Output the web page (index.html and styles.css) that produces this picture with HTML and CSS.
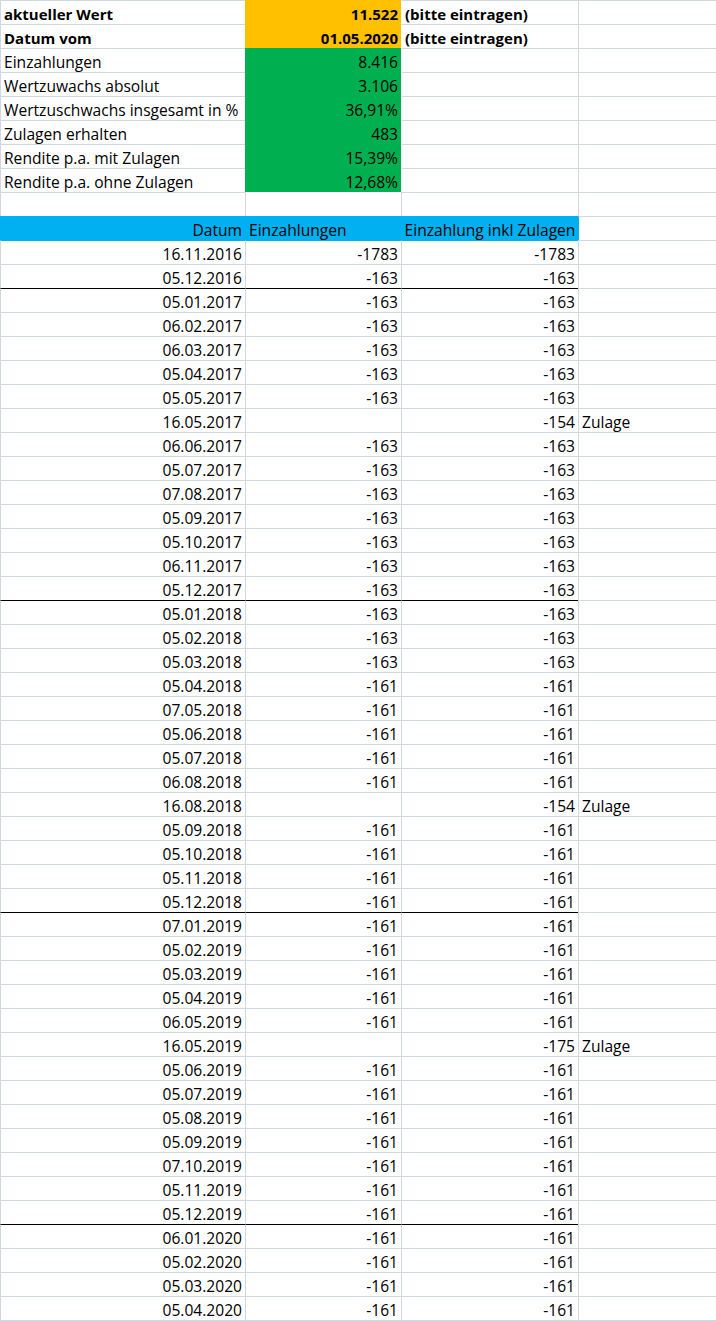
FILE: index.html
```html
<!DOCTYPE html>
<html lang="de">
<head>
<meta charset="utf-8">
<title>Wertentwicklung</title>
<link rel="stylesheet" href="styles.css">
</head>
<body>
<div class="sheet">
  <div class="c l b">aktueller Wert</div><div class="c r b orange">11.522</div><div class="c l b nl">(bitte eintragen)</div><div class="c"></div>
  <div class="c l b">Datum vom</div><div class="c r b orange">01.05.2020</div><div class="c l b nl">(bitte eintragen)</div><div class="c"></div>
  <div class="c l">Einzahlungen</div><div class="c r green">8.416</div><div class="c nl"></div><div class="c"></div>
  <div class="c l">Wertzuwachs absolut</div><div class="c r green">3.106</div><div class="c nl"></div><div class="c"></div>
  <div class="c l">Wertzuschwachs insgesamt in %</div><div class="c r green">36,91%</div><div class="c nl"></div><div class="c"></div>
  <div class="c l">Zulagen erhalten</div><div class="c r green">483</div><div class="c nl"></div><div class="c"></div>
  <div class="c l">Rendite p.a. mit Zulagen</div><div class="c r green">15,39%</div><div class="c nl"></div><div class="c"></div>
  <div class="c l">Rendite p.a. ohne Zulagen</div><div class="c r green">12,68%</div><div class="c nl"></div><div class="c"></div>
  <div class="c"></div><div class="c nt"></div><div class="c"></div><div class="c"></div>
  <div class="c r blue">Datum</div><div class="c l blue">Einzahlungen</div><div class="c ctr blue">Einzahlung inkl Zulagen</div><div class="c nlb"></div>

  <div class="c r bt">16.11.2016</div><div class="c r bt">-1783</div><div class="c r bt">-1783</div><div class="c"></div>
  <div class="c r">05.12.2016</div><div class="c r">-163</div><div class="c r">-163</div><div class="c"></div>
  <div class="c r sep">05.01.2017</div><div class="c r sep">-163</div><div class="c r sep">-163</div><div class="c"></div>
  <div class="c r">06.02.2017</div><div class="c r">-163</div><div class="c r">-163</div><div class="c"></div>
  <div class="c r">06.03.2017</div><div class="c r">-163</div><div class="c r">-163</div><div class="c"></div>
  <div class="c r">05.04.2017</div><div class="c r">-163</div><div class="c r">-163</div><div class="c"></div>
  <div class="c r">05.05.2017</div><div class="c r">-163</div><div class="c r">-163</div><div class="c"></div>
  <div class="c r">16.05.2017</div><div class="c r"></div><div class="c r">-154</div><div class="c l">Zulage</div>
  <div class="c r">06.06.2017</div><div class="c r">-163</div><div class="c r">-163</div><div class="c"></div>
  <div class="c r">05.07.2017</div><div class="c r">-163</div><div class="c r">-163</div><div class="c"></div>
  <div class="c r">07.08.2017</div><div class="c r">-163</div><div class="c r">-163</div><div class="c"></div>
  <div class="c r">05.09.2017</div><div class="c r">-163</div><div class="c r">-163</div><div class="c"></div>
  <div class="c r">05.10.2017</div><div class="c r">-163</div><div class="c r">-163</div><div class="c"></div>
  <div class="c r">06.11.2017</div><div class="c r">-163</div><div class="c r">-163</div><div class="c"></div>
  <div class="c r">05.12.2017</div><div class="c r">-163</div><div class="c r">-163</div><div class="c"></div>
  <div class="c r sep">05.01.2018</div><div class="c r sep">-163</div><div class="c r sep">-163</div><div class="c"></div>
  <div class="c r">05.02.2018</div><div class="c r">-163</div><div class="c r">-163</div><div class="c"></div>
  <div class="c r">05.03.2018</div><div class="c r">-163</div><div class="c r">-163</div><div class="c"></div>
  <div class="c r">05.04.2018</div><div class="c r">-161</div><div class="c r">-161</div><div class="c"></div>
  <div class="c r">07.05.2018</div><div class="c r">-161</div><div class="c r">-161</div><div class="c"></div>
  <div class="c r">05.06.2018</div><div class="c r">-161</div><div class="c r">-161</div><div class="c"></div>
  <div class="c r">05.07.2018</div><div class="c r">-161</div><div class="c r">-161</div><div class="c"></div>
  <div class="c r">06.08.2018</div><div class="c r">-161</div><div class="c r">-161</div><div class="c"></div>
  <div class="c r">16.08.2018</div><div class="c r"></div><div class="c r">-154</div><div class="c l">Zulage</div>
  <div class="c r">05.09.2018</div><div class="c r">-161</div><div class="c r">-161</div><div class="c"></div>
  <div class="c r">05.10.2018</div><div class="c r">-161</div><div class="c r">-161</div><div class="c"></div>
  <div class="c r">05.11.2018</div><div class="c r">-161</div><div class="c r">-161</div><div class="c"></div>
  <div class="c r">05.12.2018</div><div class="c r">-161</div><div class="c r">-161</div><div class="c"></div>
  <div class="c r sep">07.01.2019</div><div class="c r sep">-161</div><div class="c r sep">-161</div><div class="c"></div>
  <div class="c r">05.02.2019</div><div class="c r">-161</div><div class="c r">-161</div><div class="c"></div>
  <div class="c r">05.03.2019</div><div class="c r">-161</div><div class="c r">-161</div><div class="c"></div>
  <div class="c r">05.04.2019</div><div class="c r">-161</div><div class="c r">-161</div><div class="c"></div>
  <div class="c r">06.05.2019</div><div class="c r">-161</div><div class="c r">-161</div><div class="c"></div>
  <div class="c r">16.05.2019</div><div class="c r"></div><div class="c r">-175</div><div class="c l">Zulage</div>
  <div class="c r">05.06.2019</div><div class="c r">-161</div><div class="c r">-161</div><div class="c"></div>
  <div class="c r">05.07.2019</div><div class="c r">-161</div><div class="c r">-161</div><div class="c"></div>
  <div class="c r">05.08.2019</div><div class="c r">-161</div><div class="c r">-161</div><div class="c"></div>
  <div class="c r">05.09.2019</div><div class="c r">-161</div><div class="c r">-161</div><div class="c"></div>
  <div class="c r">07.10.2019</div><div class="c r">-161</div><div class="c r">-161</div><div class="c"></div>
  <div class="c r">05.11.2019</div><div class="c r">-161</div><div class="c r">-161</div><div class="c"></div>
  <div class="c r">05.12.2019</div><div class="c r">-161</div><div class="c r">-161</div><div class="c"></div>
  <div class="c r sep">06.01.2020</div><div class="c r sep">-161</div><div class="c r sep">-161</div><div class="c"></div>
  <div class="c r">05.02.2020</div><div class="c r">-161</div><div class="c r">-161</div><div class="c"></div>
  <div class="c r">05.03.2020</div><div class="c r">-161</div><div class="c r">-161</div><div class="c"></div>
  <div class="c r">05.04.2020</div><div class="c r">-161</div><div class="c r">-161</div><div class="c"></div>
</div>
</body>
</html>
```
FILE: styles.css
```css
html, body {
  margin: 0;
  padding: 0;
  background: #ffffff;
}

.sheet {
  display: grid;
  grid-template-columns: 245px 156px 177px 138px;
  width: 716px;
  border-bottom: 1px solid #d0d7e5;
  font-family: "Open Sans", "Noto Sans", sans-serif;
  font-size: 15.6px;
  color: #000000;
}

.c {
  box-sizing: border-box;
  height: 24px;
  padding-top: 3px;
  line-height: 21px;
  border-top: 1px solid #d0d7e5;
  border-left: 1px solid #d0d7e5;
  white-space: nowrap;
  overflow: visible;
}

.l { text-align: left; padding-left: 3px; }
.r { text-align: right; padding-right: 3px; }
.ctr { text-align: center; }
.b { font-weight: 700; font-size: 15px; }

.orange { background: #ffc000; border-color: #ffc000; }
.green { background: #00b050; border-color: #00b050; }
.blue { background: #00b0f0; border-color: #00b0f0; }

.nl { border-left-color: #ffffff; }
.nt { border-top-color: #ffffff; }
.nlb { border-left-color: #00b0f0; }
.bt { border-top-color: #00b0f0; }
.sep { border-top-color: #000000; }
```
